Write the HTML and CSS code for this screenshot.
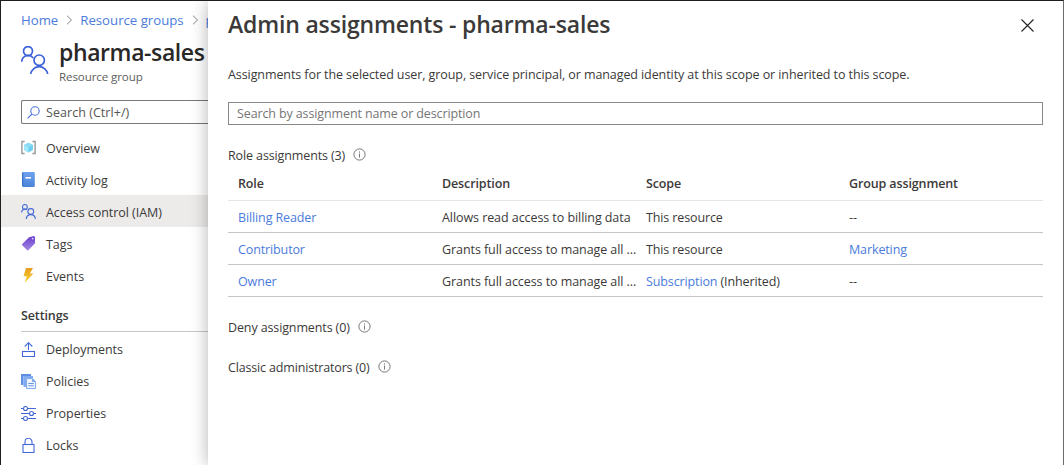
FILE: index.html
```
<!DOCTYPE html>
<html lang="en">
<head>
<meta charset="utf-8">
<title>Admin assignments - pharma-sales</title>
<link rel="stylesheet" href="styles.css">
</head>
<body>
<svg class="defs" aria-hidden="true">
  <defs>
    <linearGradient id="book" x1="0" y1="0" x2="0" y2="1"><stop offset="0" stop-color="#6fa3ee"/><stop offset="1" stop-color="#4a82d8"/></linearGradient>
    <linearGradient id="tag" x1="0" y1="0" x2="0" y2="1"><stop offset="0" stop-color="#6a3ccc"/><stop offset="1" stop-color="#a58ae4"/></linearGradient>
    <linearGradient id="bolt" x1="0" y1="0" x2="0" y2="1"><stop offset="0" stop-color="#e89b1c"/><stop offset="1" stop-color="#fbd934"/></linearGradient>
    <symbol id="info" viewBox="0 0 13 13"><circle cx="6.5" cy="6.5" r="5.6" fill="none" stroke="#666" stroke-width=".9"/><path d="M6.5 5.6v4M6.5 3.4v1.2" stroke="#777" stroke-width="1"/></symbol>
  </defs>
</svg>
<div class="page">
  <aside class="sidebar">
    <nav class="breadcrumb">
      <a>Home</a>
      <svg class="chevron" viewBox="0 0 7 10"><path d="M1 .7 5.5 5 1 9.3"/></svg>
      <a>Resource groups</a>
      <svg class="chevron" viewBox="0 0 7 10"><path d="M1 .7 5.5 5 1 9.3"/></svg>
      <a class="current">p</a>
    </nav>
    <header class="resource">
      <svg class="people-large" viewBox="0 0 28 28"><g fill="none" stroke="#3b62d9" stroke-width="1.7"><circle cx="7" cy="5.1" r="4.5"/><path d="M.8 15.7a6.3 6.3 0 0 1 11.400-3.700"/><circle cx="18.2" cy="14.2" r="5.2"/><path d="M9.700 28a8.600 8.600 0 0 1 17 0"/></g></svg>
      <div>
        <h1>pharma-sales</h1>
        <p>Resource group</p>
      </div>
    </header>
    <div class="menu-search">
      <svg viewBox="0 0 13 13"><g fill="none" stroke="#4a72d8" stroke-width="1.1"><circle cx="8" cy="5" r="4.2"/><path d="M5 8 .6 12.4"/></g></svg>
      <span>Search (Ctrl+/)</span>
    </div>
    <ul class="menu">
      <li><svg viewBox="0 0 15 15"><path d="M3.600 1.500H.9v12h2.700M11.400 1.500h2.700v12h-2.700" fill="none" stroke="#999" stroke-width="1.400"/><path d="M7.500 2.700 11.900 5v5L7.500 12.400 3.100 10V5z" fill="#6fcdf0"/><path d="M7.500 2.700 11.900 5 7.500 7.300 3.100 5z" fill="#8bdcf6"/><path d="M3.100 5l4.400 2.300v5.100L3.100 10z" fill="#a4e7fa"/></svg><span>Overview</span></li>
      <li><svg viewBox="0 0 15 15"><rect x="1" y="0" width="12.800" height="15" rx="1.200" fill="url(#book)"/><path d="M1 1.200v12.600h1.300V.1z" fill="#3c73c8"/><rect x="4.500" y="5" width="5.500" height="1.600" fill="#fff"/></svg><span>Activity log</span></li>
      <li class="selected"><svg viewBox="0 0 15 15"><g fill="none" stroke="#4468d8" stroke-width="1.100"><circle cx="3.900" cy="2.900" r="2.400"/><path d="M.6 8.600c0-3.400 3.300-4.300 5.300-2.700"/><circle cx="9.800" cy="7.500" r="2.900"/><path d="M5.200 15c.6-5.800 8.600-5.800 9.200 0"/></g></svg><span>Access control (IAM)</span></li>
      <li><svg viewBox="0 0 15 15"><path d="M8 1.300 13 0l1 1v6.200L7.400 14.300q-.6.6-1.200 0L1.200 9.200q-.6-.6 0-1.200z" fill="url(#tag)"/><circle cx="11.700" cy="2.600" r=".9" fill="#e4dbfa"/></svg><span>Tags</span></li>
      <li><svg viewBox="0 0 15 15"><path d="M5 0h7L8.900 5.400h3.500L3.600 15l2.200-6.800H2.500z" fill="url(#bolt)"/></svg><span>Events</span></li>
    </ul>
    <h2>Settings</h2>
    <ul class="menu">
      <li><svg viewBox="0 0 15 15"><g fill="none" stroke="#4468d8" stroke-width="1.100"><path d="M7.500 8V1M3.700 4.500 7.500.7l3.800 3.800"/><rect x="1.500" y="9.500" width="12" height="5"/></g></svg><span>Deployments</span></li>
      <li><svg viewBox="0 0 15 15"><path d="M0 0h10v2H2.500v9H0z" fill="#5f8fe2"/><path d="M2.500 2H12v2H5v9H2.500z" fill="#82aaf0"/><path d="M5.500 4.500h6l3 3v7h-9z" fill="#eff5ff" stroke="#82aaf0"/><path d="M11.500 4.500v3h3" fill="#82aaf0" stroke="#82aaf0"/><path d="M7.300 9.500h5.500M7.300 11.800h5.500" stroke="#6b95e4"/></svg><span>Policies</span></li>
      <li><svg viewBox="0 0 15 15"><g fill="none" stroke="#4468d8" stroke-width="1.100"><path d="M0 2.500h2.500m4 0H15M0 7.500h8.500m4 0H15M0 12.500h2.500m4 0H15"/><circle cx="4.500" cy="2.500" r="2"/><circle cx="10.500" cy="7.500" r="2"/><circle cx="4.500" cy="12.500" r="2"/></g></svg><span>Properties</span></li>
      <li><svg viewBox="0 0 15 15"><g fill="none" stroke="#4468d8" stroke-width="1.100"><rect x="2" y="6.500" width="11" height="8"/><path d="M4 6.500V3.800a3.500 3.500 0 0 1 7 0v2.700"/></g></svg><span>Locks</span></li>
    </ul>
  </aside>
  <main class="panel">
    <header class="panel-head">
      <h1>Admin assignments - pharma-sales</h1>
      <svg viewBox="0 0 13 13"><path d="M.5.5l12 12M12.500.5l-12 12" stroke="#222" stroke-width="1.100"/></svg>
    </header>
    <p class="intro">Assignments for the selected user, group, service principal, or managed identity at this scope or inherited to this scope.</p>
    <div class="filter">Search by assignment name or description</div>
    <div class="section role-title"><span>Role assignments (3)</span><svg><use href="#info"/></svg></div>
    <div class="table">
      <div class="row head"><span>Role</span><span>Description</span><span>Scope</span><span>Group assignment</span></div>
      <div class="row"><span><a>Billing Reader</a></span><span class="wide">Allows read access to billing data</span><span>This resource</span><span>--</span></div>
      <div class="row"><span><a>Contributor</a></span><span class="wide">Grants full access to manage all ...</span><span>This resource</span><span><a>Marketing</a></span></div>
      <div class="row"><span><a>Owner</a></span><span class="wide">Grants full access to manage all ...</span><span><a>Subscription</a> (Inherited)</span><span>--</span></div>
    </div>
    <div class="section deny"><span>Deny assignments (0)</span><svg><use href="#info"/></svg></div>
    <div class="section classic"><span>Classic administrators (0)</span><svg><use href="#info"/></svg></div>
  </main>
</div>
</body>
</html>
```
FILE: styles.css
```
* { box-sizing: border-box; margin: 0; padding: 0; }
body { font: 12.5px/20px "Open Sans", "Noto Sans", sans-serif; color: #3b3a39; background: #fff; letter-spacing: -.12px; }
.defs { position: absolute; width: 0; height: 0; }
svg { display: block; flex: none; }
a { color: #4b7bdb; }
.page { display: flex; width: 1064px; height: 465px; overflow: hidden; border: 1px solid #201f1f; border-right-color: #6b6b6b; border-bottom: 0; }

.sidebar { width: 207px; flex: none; overflow: hidden; white-space: nowrap; }
.breadcrumb { display: flex; align-items: center; height: 20px; margin: 9px 0 0 20px; font-size: 13.2px; letter-spacing: 0; }
.chevron { width: 7px; height: 10px; margin: 0 7px 0 8px; fill: none; stroke: #8a8a8a; }
.current { width: 2px; overflow: hidden; }
.resource { display: flex; margin: 7px 0 0 20px; gap: 10px; }
.people-large { width: 28px; height: 28px; margin-top: 9px; }
.resource h1 { font-size: 23px; font-weight: 600; line-height: 30px; letter-spacing: -.4px; color: #292827; }
.resource p { font-size: 11.6px; line-height: 16px; margin-top: 2px; color: #605e5c; }
.menu-search { display: flex; align-items: center; gap: 6px; height: 24px; margin: 15px 0 7px 20px; padding-left: 5px; border: 1px solid #777; border-right: 0; border-radius: 2px 0 0 2px; color: #555; letter-spacing: .05px; }
.menu-search span { padding-top: 2px; }
.menu-search svg { width: 13px; height: 13px; }
.menu { list-style: none; }
.menu li { display: flex; align-items: center; gap: 10px; height: 32px; padding-left: 20px; letter-spacing: -.04px; }
.menu svg { width: 15px; height: 15px; }
.menu span { padding-top: 3px; }
.menu .selected { background: #edebe9; }
.sidebar h2 { height: 28px; margin: 13px 0 1px 20px; font-size: 12.5px; line-height: 24px; font-weight: 600; border-bottom: 1px solid #c8c6c4; }
.sidebar h2 + .menu span { padding-top: 1px; }

.panel { flex: 1; position: relative; padding: 0 20px; background: #fff; box-shadow: 0 0 16px rgba(0, 0, 0, .3); }
.panel-head { display: flex; justify-content: space-between; height: 48px; }
.panel-head h1 { font-size: 23px; line-height: 46px; font-weight: 600; letter-spacing: -.17px; }
.panel-head svg { width: 13px; height: 13px; margin: 18px 9px 0 0; }
.intro { margin-top: 16px; white-space: nowrap; letter-spacing: -.085px; }
.filter { height: 23px; margin-top: 17px; padding-left: 8px; border: 1px solid #888; line-height: 21px; color: #767574; }
.section { display: flex; align-items: center; height: 20px; gap: 8px; }
.section svg { width: 13px; height: 13px; margin-bottom: 1px; }
.section span { padding-top: 1px; }
.role-title { margin-top: 20px; }
.row { display: grid; grid-template-columns: 204px 204px 203px 1fr; height: 32px; padding-left: 10px; line-height: 33px; border-bottom: 1px solid #c8c6c4; white-space: nowrap; }
.wide { letter-spacing: -.07px; }
.head { height: 36px; line-height: 38px; font-weight: 600; border-color: #e6e5e4; }
.deny { margin-top: 20px; }
.classic { margin-top: 20px; letter-spacing: -.16px; }
```
